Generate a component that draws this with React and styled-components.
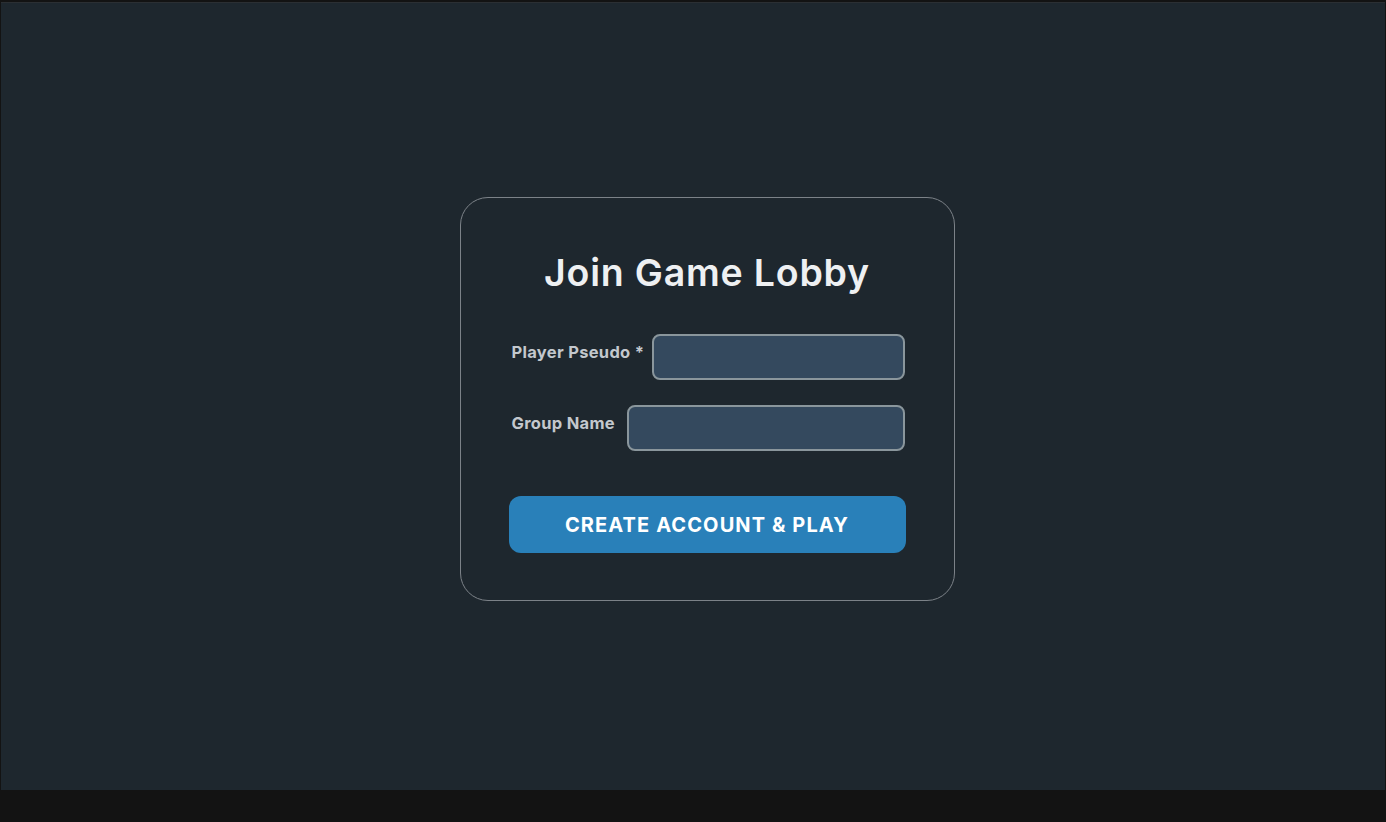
import React from "react";
import styled, { createGlobalStyle } from "styled-components";

const Global = createGlobalStyle`
  html, body { margin: 0; padding: 0; background: #131313; }
  body { font-family: Inter, "Noto Sans", "Liberation Sans", sans-serif; }
  #root { height: 822px; display: flex; flex-direction: column; }
`;

const Screen = styled.div`
  height: 788px;
  margin: 2px 1px 0 1px;
  background: #1e272e;
  border-top: 1px solid #2b2f33;
  display: flex;
  align-items: flex-start;
  justify-content: center;
  padding: 194px 0 0 28px;
  box-sizing: border-box;
`;

const Card = styled.form`
  width: 495px;
  box-sizing: border-box;
  border: 1.5px solid #7c8288;
  border-radius: 28px;
  padding: 51px 48px 47px;
  display: flex;
  flex-direction: column;
`;

const Title = styled.h1`
  margin: 0 0 37px;
  text-align: center;
  font-size: 37.5px;
  font-weight: 600;
  letter-spacing: 0.8px;
  color: #eef0f2;
  line-height: 48px;
`;

const Row = styled.div`
  display: flex;
  align-items: flex-start;
  gap: ${(p) => p.$gap || 8}px;
  padding: 0 1px 0 3px;
  margin-bottom: ${(p) => p.$mb || 0}px;
`;

const Label = styled.label`
  font-size: 16.5px;
  font-weight: 700;
  letter-spacing: 0.3px;
  color: #c3c8cd;
  margin-top: 8px;
  white-space: nowrap;
  line-height: 20px;
`;

const Input = styled.input`
  flex: 1;
  min-width: 0;
  height: 46px;
  box-sizing: border-box;
  background: #34495e;
  border: 2px solid #8a969c;
  border-radius: 8px;
  color: #ecf0f1;
  font-size: 16px;
  padding: 0 12px;
  outline: none;
`;

const Button = styled.button`
  margin-top: 45px;
  height: 57px;
  border: none;
  border-radius: 12px;
  background: #2980b9;
  color: #ffffff;
  font-family: inherit;
  font-size: 20px;
  font-weight: 700;
  letter-spacing: 1.1px;
  cursor: pointer;
`;

export default function App() {
  return (
    <>
      <Global />
      <Screen>
        <Card onSubmit={(e) => e.preventDefault()}>
          <Title>Join Game Lobby</Title>
          <Row $mb={25}>
            <Label htmlFor="pseudo">Player Pseudo *</Label>
            <Input id="pseudo" />
          </Row>
          <Row $gap={12}>
            <Label htmlFor="group">Group Name</Label>
            <Input id="group" />
          </Row>
          <Button type="submit">CREATE ACCOUNT &amp; PLAY</Button>
        </Card>
      </Screen>
    </>
  );
}
